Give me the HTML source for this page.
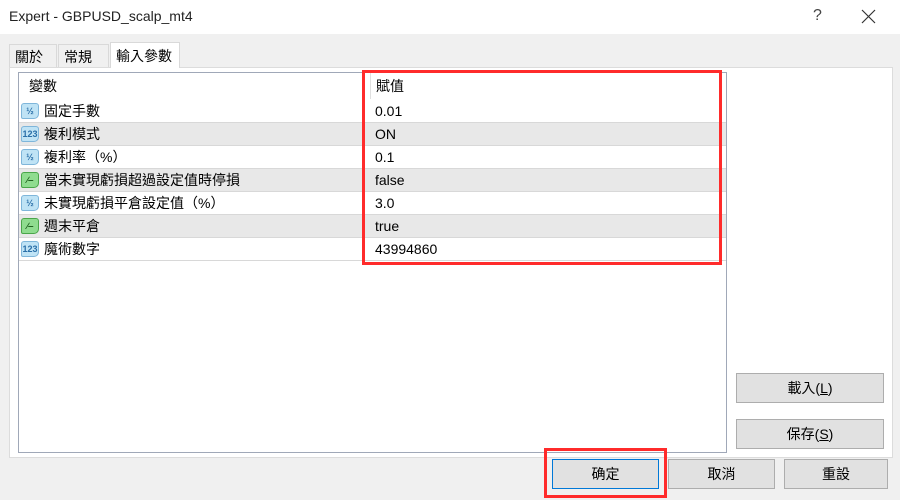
<!DOCTYPE html>
<html><head><meta charset="utf-8"><style>
*{margin:0;padding:0;box-sizing:border-box}
body{width:900px;height:500px;overflow:hidden;background:#f0f0f0;font-family:"Liberation Sans","Noto Sans CJK TC",sans-serif;font-size:13px;color:#000;position:relative;line-height:18px}
.abs{position:absolute}
.title{left:0;top:0;width:900px;height:34px;background:#fff}
.tab{top:44px;height:24px;border:1px solid #d9d9d9;border-bottom:none;background:#f0f0f0;padding:2px 5px;font-size:14px;line-height:20px}
.panel{left:9px;top:67px;width:884px;height:391px;background:#fff;border:1px solid #dcdcdc}
.lv{left:18px;top:72px;width:709px;height:381px;background:#fff;border:1px solid #a0a8b8}
.row{position:absolute;left:0;width:707px;height:23px;border-bottom:1px solid #d8d8d8;font-size:14px}
.row.g{background:#e8e8e8}
.row .n{position:absolute;left:25px;top:2px;line-height:18px;height:18px}
.row .v{position:absolute;left:356px;top:2px;line-height:18px;height:18px}
.ic{position:absolute;left:2px;top:3px;width:18px;height:16px;border-radius:3px 3px 5px 2px;font-size:9px;font-weight:bold;line-height:15px;text-align:center}
.b{background:#bfe3f5;color:#2a6fa8;border:1px solid #7fb6da}
.gr{background:#8fdc8f;border:1px solid #4aa64a;color:#1a5a1a}
.btn{height:30px;background:#e1e1e1;border:1px solid #adadad;text-align:center;line-height:28px;font-size:14px}
.red{border:3px solid #ff2b2b}
</style></head><body>
<div class="abs title"><span class="abs" style="left:9px;top:7px;font-size:14px;color:#222">Expert - GBPUSD_scalp_mt4</span>
<span class="abs" style="left:813px;top:7px;font-size:16px;color:#444">?</span>
<svg class="abs" style="left:861px;top:9px" width="15" height="15"><path d="M1 1L14 14M14 1L1 14" stroke="#333" stroke-width="1.2"/></svg></div>
<div class="abs tab" style="left:9px;width:48px">關於</div>
<div class="abs tab" style="left:58px;width:51px">常規</div>
<div class="abs panel"></div>
<div class="abs tab" style="left:110px;top:42px;height:26px;width:70px;background:#fff;padding-top:3px">輸入參數</div>
<div class="abs lv">
 <div class="abs" style="left:0;top:0;width:707px;height:26px;background:#fff;font-size:14px"><span class="abs" style="left:10px;top:4px">變數</span><span class="abs" style="left:351px;top:0;height:26px;border-left:1px solid #e0e0e0"></span><span class="abs" style="left:357px;top:4px">賦值</span></div>
 <div class="row" style="top:27px"><span class="ic b">½</span><span class="n">固定手數</span><span class="v">0.01</span></div>
 <div class="row g" style="top:50px"><span class="ic b">123</span><span class="n">複利模式</span><span class="v">ON</span></div>
 <div class="row" style="top:73px"><span class="ic b">½</span><span class="n">複利率（%）</span><span class="v">0.1</span></div>
 <div class="row g" style="top:96px"><span class="ic gr">∕‒</span><span class="n">當未實現虧損超過設定值時停損</span><span class="v">false</span></div>
 <div class="row" style="top:119px"><span class="ic b">½</span><span class="n">未實現虧損平倉設定值（%）</span><span class="v">3.0</span></div>
 <div class="row g" style="top:142px"><span class="ic gr">∕‒</span><span class="n">週末平倉</span><span class="v">true</span></div>
 <div class="row" style="top:165px"><span class="ic b">123</span><span class="n">魔術數字</span><span class="v">43994860</span></div>
</div>
<div class="abs red" style="left:362px;top:70px;width:360px;height:195px"></div>
<div class="abs btn" style="left:736px;top:373px;width:148px">載入(<u>L</u>)</div>
<div class="abs btn" style="left:736px;top:419px;width:148px">保存(<u>S</u>)</div>
<div class="abs btn" style="left:552px;top:459px;width:107px;border:1px solid #0078d7">确定</div>
<div class="abs btn" style="left:668px;top:459px;width:107px">取消</div>
<div class="abs btn" style="left:784px;top:459px;width:104px">重設</div>
<div class="abs red" style="left:544px;top:448px;width:123px;height:50px"></div>
</body></html>
